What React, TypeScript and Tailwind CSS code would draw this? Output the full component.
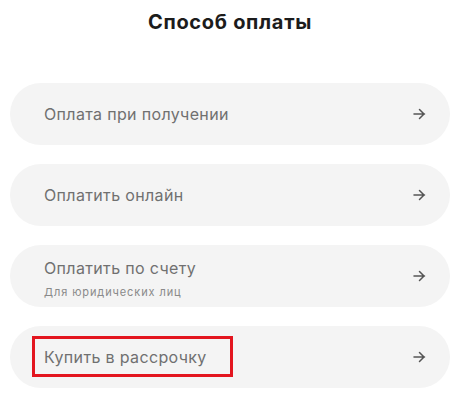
import React from 'react';

const options = [
  { title: 'Оплата при получении' },
  { title: 'Оплатить онлайн' },
  { title: 'Оплатить по счету', note: 'Для юридических лиц' },
  { title: 'Купить в рассрочку', marked: true },
];

const Arrow = () => (
  <svg width="13" height="12" viewBox="0 0 13 12" fill="none" stroke="#555" strokeWidth="1.5" strokeLinecap="round" strokeLinejoin="round">
    <path d="M1 6h10.5M6.5 1.5l4.5 4.5-4.5 4.5" />
  </svg>
);

const App = () => {
  return (
    <div className="w-[460px] h-[398px] bg-white overflow-hidden" style={{ fontFamily: 'Inter, "Noto Sans", sans-serif' }}>
      <h1 className="text-center text-[20px] font-bold text-[#1c1c1c] pt-[8px] leading-[28px] tracking-[0.7px]">Способ оплаты</h1>
      <div className="flex flex-col gap-[19px] px-[10px] mt-[47px]">
        {options.map((o) => (
          <div key={o.title} className="relative h-[62px] rounded-full bg-[#f4f4f4] flex items-center justify-between pl-[34px] pr-[24px]">
            <div className={o.note ? 'flex flex-col pt-[4px]' : 'flex flex-col'}>
              <span className="text-[16px] text-[#707070] leading-[20px] tracking-[0.35px]">{o.title}</span>
              {o.note && <span className="text-[11px] text-[#8a8a8a] leading-[14px] mt-[7px] tracking-[0.9px]">{o.note}</span>}
            </div>
            <Arrow />
            {o.marked && (
              <div className="absolute left-[22px] top-[10px] w-[201px] h-[41px] border-[3px] border-[#e3151f]" />
            )}
          </div>
        ))}
      </div>
    </div>
  );
};

export default App;
